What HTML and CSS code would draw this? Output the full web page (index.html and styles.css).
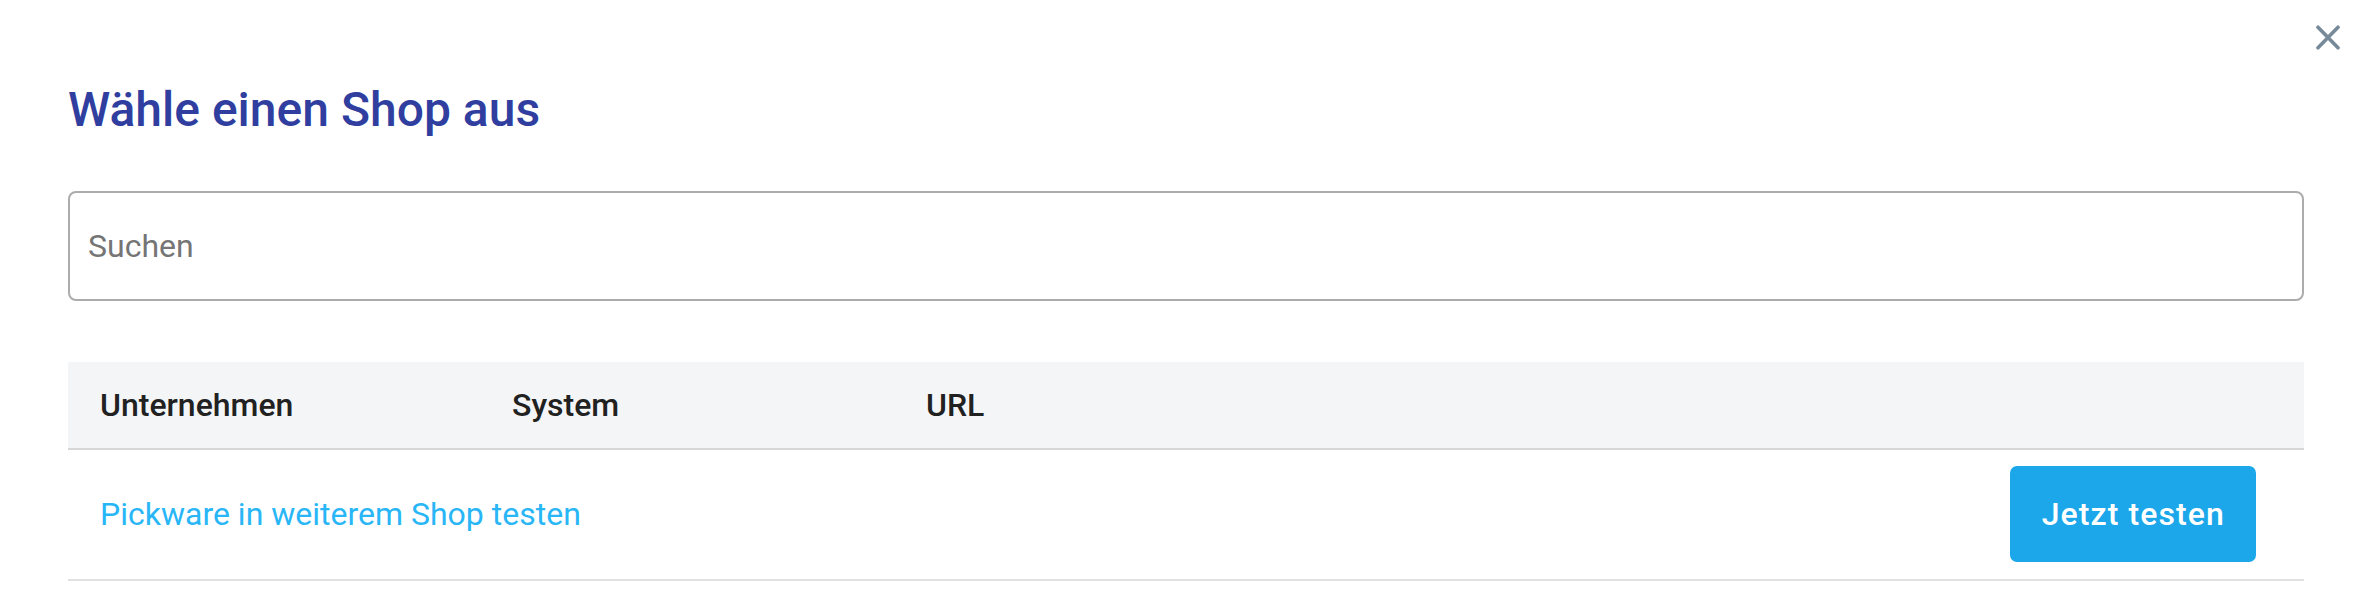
FILE: index.html
```html
<!DOCTYPE html>
<html lang="de">
<head>
<meta charset="utf-8">
<title>Wähle einen Shop aus</title>
<link rel="stylesheet" href="styles.css">
</head>
<body>
<div class="dialog">
  <button class="close" aria-label="Schließen">
    <svg width="24" height="25" viewBox="0 0 24 25" aria-hidden="true">
      <path d="M2 2.2 L22 22.8 M22 2.2 L2 22.8" stroke="#778a99" stroke-width="3.6" stroke-linecap="round" fill="none"/>
    </svg>
  </button>
  <h1 class="title">Wähle einen Shop aus</h1>
  <input class="search" type="text" placeholder="Suchen">
  <div class="table">
    <div class="thead">
      <div class="th">Unternehmen</div>
      <div class="th">System</div>
      <div class="th">URL</div>
    </div>
    <div class="trow">
      <a class="link" href="#">Pickware in weiterem Shop testen</a>
      <button class="btn">Jetzt testen</button>
    </div>
  </div>
</div>
</body>
</html>
```
FILE: styles.css
```css
* { box-sizing: border-box; }
html, body { margin: 0; padding: 0; background: #ffffff; }
body { font-family: Roboto, "Noto Sans", "Liberation Sans", sans-serif; }

.dialog {
  position: relative;
  padding: 82px 70px 0 68px;
  height: 590px;
}

.close {
  position: absolute;
  top: 25px;
  right: 34px;
  width: 24px;
  height: 25px;
  padding: 0;
  margin: 0;
  border: 0;
  background: transparent;
  display: block;
  cursor: pointer;
}
.close svg { display: block; }

.title {
  margin: 0;
  font-size: 48px;
  line-height: 56px;
  font-weight: 500;
  color: #303f9f;
}

.search {
  display: block;
  width: 100%;
  height: 110px;
  margin: 53px 0 0 0;
  padding: 0 18px;
  border: 2px solid #acacac;
  border-radius: 8px;
  font-family: Roboto, "Noto Sans", sans-serif;
  font-size: 32px;
  color: #212121;
  outline: none;
  background: #fff;
}
.search::placeholder { color: #757575; opacity: 1; }

.table { margin-top: 61px; }

.thead {
  display: grid;
  grid-template-columns: 412px 414px 1fr;
  align-items: center;
  height: 88px;
  padding-left: 32px;
  background: #f4f5f7;
  border-bottom: 2px solid #d6d7d9;
}
.th {
  font-size: 32px;
  font-weight: 500;
  color: #212121;
  line-height: 38px;
}

.trow {
  display: flex;
  align-items: center;
  justify-content: space-between;
  height: 131px;
  padding: 0 48px 1px 32px;
  border-bottom: 2px solid #e0e0e0;
}
.link {
  font-size: 32px;
  line-height: 38px;
  color: #29b6f6;
  text-decoration: none;
}
.btn {
  height: 96px;
  padding: 0 31px 0 32px;
  border: 0;
  border-radius: 7px;
  background: #1ba7ea;
  color: #ffffff;
  font-family: Roboto, "Noto Sans", sans-serif;
  font-size: 32px;
  font-weight: 500;
  letter-spacing: 1.1px;
  cursor: pointer;
}
```
